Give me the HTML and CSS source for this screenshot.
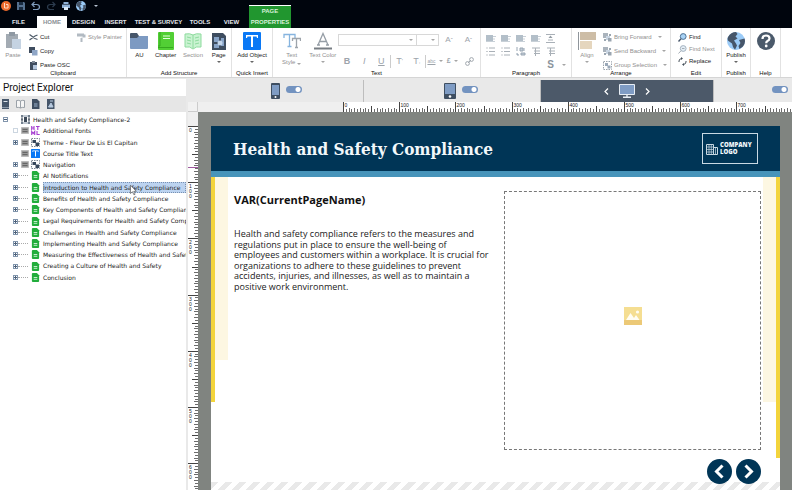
FILE: index.html
```html
<!DOCTYPE html>
<html lang="en">
<head>
<meta charset="utf-8">
<title>Health and Safety Compliance-2</title>
<link rel="stylesheet" href="styles.css">
</head>
<body>
<svg class="defs" aria-hidden="true">
  <symbol id="cut" viewBox="0 0 9 9"><path d="M.5 1.500 6 5.500M.5 7 6 3M6 3l2.500-1M6 5.500l2.500 1" fill="none" stroke="#4d5a68" stroke-width="1.200"/></symbol>
  <symbol id="copy" viewBox="0 0 9 9"><path d="M0 0h6v6H0z" fill="#3f4d5f"/><path d="M3 3h5.500v5.500H3z" fill="#8fa6c6"/></symbol>
  <symbol id="osc" viewBox="0 0 9 9"><path d="M1 1h7v8H1z" fill="#3f4d5f"/><path d="M3 0h3v2H3z" fill="#7d8896"/><path d="M4 4h4v4.500H4z" fill="#b4c7de"/></symbol>
  <symbol id="painter" viewBox="0 0 9 9"><path d="M0 .5h7v3H0zM7 1.500h1.500v3H4.500v1M3.500 5h2v4h-2z" fill="#b2bac2"/></symbol>
  <symbol id="paste" viewBox="0 0 16 18"><path d="M1 2h12v14H1z" fill="#a3abb3"/><path d="M4 0h6v4H4z" fill="#8f99a3"/><path d="M7 7h9v10H7z" fill="#c5d3e2"/></symbol>
  <symbol id="folder" viewBox="0 0 18 18"><path d="M0 4h18v12q0 1-1 1H1q-1 0-1-1z" fill="#7d9ac2"/><path d="M0 2q0-1 1-1h6l2 3-2 2H0z" fill="#46566a"/></symbol>
  <symbol id="chapter" viewBox="0 0 16 18"><rect width="16" height="18" rx="1" fill="#52cf35"/><path d="M2 0v14H0M0 15.500h15" stroke="#35a91f" fill="none"/><path d="M5 4h7M5 6.500h7" stroke="#e6ffe0"/></symbol>
  <symbol id="section" viewBox="0 0 18 18"><path d="M1 2q5-1 8 1 3-2 8-1v13q-5-1-8 2-3-3-8-2z" fill="#c9f3d1" stroke="#8edb9e"/><path d="M9 3v13M3 5l4 1M3 8l4 1M3 11l4 1M15 5l-4 1M15 8l-4 1M15 11l-4 1" stroke="#8edb9e" fill="none"/></symbol>
  <symbol id="page" viewBox="0 0 14 18"><path d="M0 1h11l3 3v14H0z" fill="#3e4d60"/><path d="M2 5h5v5H2zM9 6h3v8H9zM2 12h5v4H2z" fill="#87a3c7"/><circle cx="8" cy="11" r="2.500" fill="#c5d7ec"/></symbol>
  <symbol id="tbox" viewBox="0 0 18 18"><rect width="18" height="18" rx="1" fill="#0a78f5"/><path d="M3 3h12v3h-1l-.5-1.500h-3.500V15h-2V4.500H4.500L4 6H3z" fill="#fff"/></symbol>
  <symbol id="tt" viewBox="0 0 18 18"><path d="M1 6V2.500h11V6M6.500 2.500v12M4.500 14.500h4" fill="none" stroke="#86b4df" stroke-width="1.300"/><path d="M9.500 9V6.500h8V9M13.500 6.500v9M12 15.500h3" fill="none" stroke="#9da4ab" stroke-width="1.300"/></symbol>
  <symbol id="acolor" viewBox="0 0 18 18"><path d="M4 13 9 1.500l5 11.500M5.500 9.500h7M3 13h3M12 13h3" fill="none" stroke="#969ea6" stroke-width="1.300"/><path d="M0 15.500h18v2H0z" fill="#777d83"/></symbol>
  <symbol id="align" viewBox="0 0 18 18"><path d="M.5 0v18" stroke="#8f959b" stroke-width="1"/><path d="M2 0h16v8H2z" fill="#cdbda6"/><path d="M2 9h12v8H2z" fill="#e5d6be"/></symbol>
  <symbol id="layers" viewBox="0 0 9 9"><path d="M0 0h5v5H0z" fill="#aab3bc"/><path d="M3 3h4v4H3z" fill="#c9d5e2"/><path d="M5 5h3.500v3.500H5zM6 1h2v2H6zM1 6h2v2H1z" fill="#9aa5b0"/></symbol>
  <symbol id="group" viewBox="0 0 9 9"><path d="M.5.5h8v8h-8z" fill="none" stroke="#9aa3ac" stroke-dasharray="1.500 1"/><path d="M2 2h3v3H2zM4.500 4.500h3v3h-3z" fill="#9aa8b8"/></symbol>
  <symbol id="find" viewBox="0 0 9 9"><circle cx="5.200" cy="3.500" r="2.900" fill="#a8d2f5" stroke="#4f7294"/><path d="M3 5.800.5 8.500" stroke="#46566a" stroke-width="1.400"/></symbol>
  <symbol id="findnext" viewBox="0 0 9 9"><circle cx="5.200" cy="3.500" r="2.900" fill="#e4eef6" stroke="#a5b3c0"/><path d="M3 5.800.5 8.500M4 3.500h2.500" stroke="#a5adb5"/></symbol>
  <symbol id="replace" viewBox="0 0 9 9"><path d="M1 5V4q0-2 2.500-2.500M8 4v1q0 2-2.500 2.500" fill="none" stroke="#46505a"/><path d="M3 0l2 1.500L3 3zM6 6 4 7.500 6 9z" fill="#46505a"/></symbol>
  <symbol id="globe" viewBox="0 0 18 18"><circle cx="9" cy="9" r="9" fill="#9bcbf7"/><path d="M1 5Q4 0 9 0l1.500 2-2 2.500 2 2-3.500 2 2 3 1 2-2 4.300L6 15l-1-3.500L1.500 9Q0 8 1 5zM12 8l5.500-1.500q1.500 4-1.500 8L12.500 17l-1-3 2-3z" fill="#46566a"/></symbol>
  <symbol id="help" viewBox="0 0 18 18"><circle cx="9" cy="9" r="9" fill="#4b5a6b"/><path d="M5.500 7q0-3.500 3.500-3.500T12.500 6.500Q12.500 8 10.500 9 9.200 9.700 9.200 11.200" fill="none" stroke="#fff" stroke-width="2.200"/><circle cx="9.200" cy="14" r="1.400" fill="#fff"/></symbol>
  <symbol id="pleft" viewBox="0 0 10 9"><path d="M0 1h7v6H0z" fill="#b3bfc9"/><path d="M7 2.500h3M7 5h2M0 7.500h9" stroke="#c8d0d7"/></symbol>
  <symbol id="list" viewBox="0 0 10 9"><path d="M3 1h6M3 4.500h6M3 8h6" stroke="#a9b0b7"/><path d="M.5 1h1M.5 4.500h1M.5 8h1" stroke="#8e979f"/></symbol>
  <symbol id="num" viewBox="0 0 10 9"><path d="M1 0v4M1 6v2h2M4 1h3v3H4zM5 6h4v2H5zM8 1v3" stroke="#99a6b3" fill="#c2ccd6"/></symbol>
  <symbol id="ind" viewBox="0 0 10 9"><path d="M1 1h8M3 4h6M3 6.500h6M4.500 1v8" stroke="#a9b0b7" fill="none"/></symbol>
  <symbol id="gap" viewBox="0 0 10 9"><path d="M0 .5h9M0 8.500h9M2 6h5" stroke="#a9b0b7"/><path d="M2.500 4l2-2.500 2 2.500z" fill="#939ba3"/></symbol>
  <symbol id="link" viewBox="0 0 9 9"><path d="M3 6 6 3" stroke="#a0a7ae"/><circle cx="6.500" cy="2.500" r="1.900" fill="none" stroke="#a0a7ae"/><circle cx="2.500" cy="6.500" r="1.900" fill="none" stroke="#a0a7ae"/></symbol>
  <symbol id="doc" viewBox="0 0 8 10"><path d="M0 1q0-1 1-1h4.500L8 2.500V9q0 1-1 1H1q-1 0-1-1z" fill="#22ad3c"/><path d="M2 5h4M2 7h4" stroke="#d6f5dc"/></symbol>
  <symbol id="lines" viewBox="0 0 8 7"><path d="M.5.5h7v6h-7z" fill="#999" stroke="#bbb"/><path d="M1.500 2.500h5M1.500 4.500h5" stroke="#666"/></symbol>
  <symbol id="obj" viewBox="0 0 9 9"><path d="M.5.5h8v8h-8z" fill="none" stroke="#7b8794" stroke-dasharray="1.500 1"/><path d="M1.500 2h3.500v3H1.500zM4.500 4.500H8V8H4.500z" fill="#36475b"/></symbol>
  <symbol id="course" viewBox="0 0 9 9"><path d="M1 0v9M8 0v9" stroke="#3d4a59" stroke-width="1.600" stroke-dasharray="2.500 .7"/><path d="M3 2h3v5H3z" fill="#3d4a59"/><path d="M0 1h9M0 8h9" stroke="#8494a5"/></symbol>
  <symbol id="html" viewBox="0 0 9 9"><path d="M.7 0v4M3 0v4M.7 2H3M5 .5h3.600M6.800.5V4M.7 9V5.500L2.200 7.500 3.700 5.500V9M6 5v3.500h2.700" fill="none" stroke="#a43bd0" stroke-width="1.100"/></symbol>
  <symbol id="prev" viewBox="0 0 25 25"><circle cx="12.500" cy="12.500" r="12.500" fill="#003556"/><path d="M15.500 6.500 9.500 12.500l6 6" fill="none" stroke="#fff" stroke-width="3"/></symbol>
  <symbol id="next" viewBox="0 0 25 25"><circle cx="12.500" cy="12.500" r="12.500" fill="#003556"/><path d="M9.500 6.500l6 6-6 6" fill="none" stroke="#fff" stroke-width="3"/></symbol>
</svg>

<header class="top">
  <div class="quick">
    <button aria-label="Application"><svg viewBox="0 0 10 10"><circle cx="5" cy="5" r="5" fill="#ed6a2c"/><path d="M3.500 2v5h3.500M5 3.500h2V7" fill="none" stroke="#ffd9c2"/></svg></button>
    <button aria-label="Save"><svg viewBox="0 0 10 10"><path d="M1 1h7l1 1v7H1z" fill="#54708f"/><path d="M3 1h4v3H3zM3 6h4v3H3z" fill="#192b40"/></svg></button>
    <button aria-label="Undo"><svg viewBox="0 0 10 10"><path d="M3.500 1 1 3.500 3.500 6M1 3.500h4.500q3 0 3 2.500T5.500 8.500H2" fill="none" stroke="#7f9cbd" stroke-width="1.200"/></svg></button>
    <button aria-label="Redo"><svg viewBox="0 0 10 10"><path d="M6.500 1 9 3.500 6.500 6M9 3.500H4.500q-3 0-3 2.500T4.500 8.500H8" fill="none" stroke="#2c3c4e" stroke-width="1.200"/></svg></button>
    <button aria-label="Print"><svg viewBox="0 0 10 10"><path d="M2.500 1h5v2h-5zM1 3.500h8v3.500H1z" fill="#8fb0d5"/><path d="M3 6h4v3H3z" fill="#dbe8f6"/></svg></button>
    <button aria-label="Publish to web"><svg viewBox="0 0 18 18"><use href="#globe"/></svg></button>
    <button aria-label="Customize toolbar"><i class="caret light"></i></button>
  </div>
  <nav class="tabs">
    <button>FILE</button><button class="on">HOME</button><button>DESIGN</button><button>INSERT</button><button>TEST &amp; SURVEY</button><button>TOOLS</button><button>VIEW</button><button class="context"><span>PAGE</span><span>PROPERTIES</span></button>
  </nav>
</header>

<section class="ribbon" aria-label="Home">
  <div class="group"><div class="tools clip">
    <button class="big off"><svg><use href="#paste"/></svg>Paste</button>
    <div class="stack">
      <button class="row"><svg><use href="#cut"/></svg>Cut</button>
      <button class="row"><svg><use href="#copy"/></svg>Copy</button>
      <button class="row"><svg><use href="#osc"/></svg>Paste OSC</button>
    </div>
    <button class="row off"><svg><use href="#painter"/></svg>Style Painter</button>
  </div><h2>Clipboard</h2></div>

  <div class="group"><div class="tools spread">
    <button class="big"><svg><use href="#folder"/></svg>AU</button>
    <button class="big"><svg><use href="#chapter"/></svg>Chapter</button>
    <button class="big off"><svg><use href="#section"/></svg>Section</button>
    <button class="big"><svg><use href="#page"/></svg>Page<i class="caret"></i></button>
  </div><h2>Add Structure</h2></div>

  <div class="group"><div class="tools spread">
    <button class="big"><svg><use href="#tbox"/></svg>Add Object<i class="caret"></i></button>
  </div><h2>Quick Insert</h2></div>

  <div class="group"><div class="tools text">
    <button class="big off"><svg><use href="#tt"/></svg>Text<span>Style <i class="caret"></i></span></button>
    <button class="big off"><svg><use href="#acolor"/></svg>Text Color<i class="caret"></i></button>
    <div class="format">
      <div class="line">
        <div class="pick"><select aria-label="Font"><option></option></select><i class="caret"></i></div>
        <div class="pick size"><select aria-label="Font size"><option></option></select><i class="caret"></i></div>
        <button aria-label="Grow font">A<sup>ˆ</sup></button><button aria-label="Shrink font">A<sup>ˇ</sup></button>
      </div>
      <div class="line glyphs">
        <button><b>B</b></button><button><em>I</em></button><button><u>U</u></button><hr>
        <button aria-label="Superscript">T<sup>'</sup></button><button aria-label="Subscript">T<sub>,</sub></button><hr>
        <button aria-label="Spelling"><small>abc</small><i class="caret"></i></button><button aria-label="Symbol"><b class="sym">£</b><i class="caret"></i></button>
        <button aria-label="Link"><svg><use href="#link"/></svg></button>
      </div>
    </div>
  </div><h2>Text</h2></div>

  <div class="group"><div class="tools para">
    <button aria-label="Align left"><svg><use href="#pleft"/></svg></button><button aria-label="Align center"><svg><use href="#pleft"/></svg></button><button aria-label="Align right"><svg><use href="#pleft"/></svg></button><button aria-label="Justify"><svg><use href="#pleft"/></svg></button><button aria-label="Spacing"><svg><use href="#gap"/></svg></button>
    <button aria-label="Numbering"><svg><use href="#list"/></svg></button><button aria-label="Bullets"><svg><use href="#list"/></svg></button><button aria-label="List style"><svg><use href="#num"/></svg></button><button aria-label="Outdent"><svg><use href="#ind"/></svg></button><button aria-label="Indent"><svg><use href="#ind"/></svg></button>
    <button class="styles"><b>S</b><i class="caret"></i></button>
  </div><h2>Paragraph</h2></div>

  <div class="group"><div class="tools arrange">
    <button class="big off"><svg><use href="#align"/></svg>Align<i class="caret"></i></button>
    <div class="stack">
      <button class="row off"><svg><use href="#layers"/></svg>Bring Forward <i class="caret"></i></button>
      <button class="row off"><svg><use href="#layers"/></svg>Send Backward <i class="caret"></i></button>
      <button class="row off"><svg><use href="#group"/></svg>Group Selection <i class="caret"></i></button>
    </div>
  </div><h2>Arrange</h2></div>

  <div class="group"><div class="tools edit">
    <div class="stack tight">
      <button class="row"><svg><use href="#find"/></svg>Find</button>
      <button class="row off"><svg><use href="#findnext"/></svg>Find Next</button>
      <button class="row"><svg><use href="#replace"/></svg>Replace</button>
    </div>
  </div><h2>Edit</h2></div>

  <div class="group"><div class="tools spread"><button class="big"><svg><use href="#globe"/></svg>Publish<i class="caret"></i></button></div><h2>Publish</h2></div>
  <div class="group"><div class="tools spread"><button class="big" aria-label="Help"><svg><use href="#help"/></svg></button></div><h2>Help</h2></div>
</section>

<main class="work">
  <aside class="explorer">
    <h1>Project Explorer</h1>
    <div class="bar">
      <button aria-label="Book"><svg viewBox="0 0 9 10"><path d="M1 0h7v10H1z" fill="#46566a"/><path d="M2.500 2.500h4" stroke="#dce3ea"/><path d="M1 8.500h7" stroke="#8d9aa9"/></svg></button>
      <button aria-label="Open book"><svg viewBox="0 0 9 10"><path d="M.5 1.500q2.500-.5 4 .5 1.500-1 4-.5v7q-2.500-.5-4 .5-1.500-1-4-.5zM4.500 2v7" fill="#f6f6f6" stroke="#9aa1a8"/></svg></button>
      <button aria-label="Page"><svg viewBox="0 0 9 10"><path d="M1 0h5l2.500 2.500V10H1z" fill="#3f4e61"/><path d="M3 5h3.500M3 7h3.500" stroke="#9cb2cc"/></svg></button>
      <button aria-label="Object"><svg viewBox="0 0 9 10"><path d="M1 0h7.500v10H1z" fill="#46566a"/><path d="M2.500 8 5 4l2 4zM4 2h3" fill="#b9cbe0" stroke="#b9cbe0"/></svg></button>
    </div>
    <ul class="tree">
      <li class="root"><i class="tw minus"></i><svg><use href="#course"/></svg><span>Health and Safety Compliance-2</span></li>
      <li><i class="tw faint"></i><svg class="mark"><use href="#lines"/></svg><svg><use href="#html"/></svg><span>Additional Fonts</span></li>
      <li><i class="tw"></i><svg class="mark"><use href="#lines"/></svg><svg><use href="#obj"/></svg><span>Theme - Fleur De Lis El Capitan</span></li>
      <li><i class="tw none"></i><svg class="mark"><use href="#lines"/></svg><svg viewBox="0 0 18 18"><use href="#tbox"/></svg><span>Course Title Text</span></li>
      <li><i class="tw"></i><svg class="mark"><use href="#lines"/></svg><svg><use href="#obj"/></svg><span>Navigation</span></li>
      <li><i class="tw"></i><i class="dots"></i><svg><use href="#doc"/></svg><span>AI Notifications</span></li>
      <li class="sel"><i class="tw"></i><i class="dots"></i><svg><use href="#doc"/></svg><span>Introduction to Health and Safety Compliance</span>
        <svg class="pointer" viewBox="0 0 8 12"><path d="M.5.5v9.500l2.300-2 1.700 3.500 1.300-.6L4.300 7.500h3z" fill="#fff" stroke="#555" stroke-width=".8"/></svg></li>
      <li><i class="tw"></i><i class="dots"></i><svg><use href="#doc"/></svg><span>Benefits of Health and Safety Compliance</span></li>
      <li><i class="tw"></i><i class="dots"></i><svg><use href="#doc"/></svg><span>Key Components of Health and Safety Compliance</span></li>
      <li><i class="tw"></i><i class="dots"></i><svg><use href="#doc"/></svg><span>Legal Requirements for Health and Safety Compliance</span></li>
      <li><i class="tw"></i><i class="dots"></i><svg><use href="#doc"/></svg><span>Challenges in Health and Safety Compliance</span></li>
      <li><i class="tw"></i><i class="dots"></i><svg><use href="#doc"/></svg><span>Implementing Health and Safety Compliance</span></li>
      <li><i class="tw"></i><i class="dots"></i><svg><use href="#doc"/></svg><span>Measuring the Effectiveness of Health and Safety</span></li>
      <li><i class="tw"></i><i class="dots"></i><svg><use href="#doc"/></svg><span>Creating a Culture of Health and Safety</span></li>
      <li><i class="tw"></i><i class="dots"></i><svg><use href="#doc"/></svg><span>Conclusion</span></li>
    </ul>
  </aside>

  <section class="editor">
    <div class="devices">
      <div class="device phone"><svg viewBox="0 0 9 16"><rect width="9" height="16" rx="1" fill="#3f4f62"/><path d="M1 2h7v10H1z" fill="#7f9cc4"/><circle cx="4.500" cy="14" r="1" fill="#fff"/></svg><input type="checkbox" class="switch" aria-label="Phone layout" checked></div>
      <div class="device tablet"><svg viewBox="0 0 12 16"><rect width="12" height="16" rx="1" fill="#3f4f62"/><path d="M1 1h10v10H1z" fill="#7f9cc4"/><circle cx="6" cy="13.500" r="1.300" fill="#fff"/></svg><input type="checkbox" class="switch" aria-label="Tablet layout" checked></div>
      <div class="device desktop"><button aria-label="Previous device"><svg viewBox="0 0 5 7"><path d="M4 .5 1 3.500l3 3" fill="none" stroke="#fff" stroke-width="1.200"/></svg></button>
        <svg viewBox="0 0 16 14"><path d="M.5.5h15v10H.5z" fill="#7f9cc4" stroke="#e8eef5"/><path d="M8 11v2M4 13.300h8" stroke="#e8eef5" stroke-width="1.400"/></svg>
        <button aria-label="Next device"><svg viewBox="0 0 5 7"><path d="M1 .5l3 3-3 3" fill="none" stroke="#fff" stroke-width="1.200"/></svg></button></div>
      <div class="device last"><input type="checkbox" class="switch" aria-label="Alternate layout" checked></div>
    </div>
    <div class="sheet">
      <div class="corner"></div>
      <svg class="ruler-x" id="rx"></svg>
      <svg class="ruler-y" id="ry"></svg>
      <div class="canvas">
        <article class="page">
          <header><h2>Health and Safety Compliance</h2>
            <div class="logo"><svg viewBox="0 0 12 12"><path d="M.5 1.500h7v10h-7zM7.500 4.500h4v7h-4z" fill="none" stroke="#c9d9e3"/><path d="M.5 4h7M.5 6.500h7M.5 9h7M3 1.500v10M5.300 1.500v10M9.500 5v7" stroke="#c9d9e3" stroke-width=".7"/></svg><span>COMPANY<br>LOGO</span></div>
          </header>
          <div class="body">
            <div class="edge left"></div>
            <div class="copy"><h3>VAR(CurrentPageName)</h3>
              <p>Health and safety compliance refers to the measures and<br>regulations put in place to ensure the well-being of<br>employees and customers within a workplace. It is crucial for<br>organizations to adhere to these guidelines to prevent<br>accidents, injuries, and illnesses, as well as to maintain a<br>positive work environment.</p></div>
            <div class="media"><svg viewBox="0 0 18 18"><path d="M0 0h18v18H0z" fill="#f5de92"/><path d="M0 13h18v5H0z" fill="#ecc977"/><path d="M2 13l4.500-7 3.500 5 2-3 3.500 5z" fill="#fffdf3"/><circle cx="13.500" cy="5" r="1.600" fill="#fffdf3"/></svg></div>
            <div class="edge right"></div>
          </div>
          <footer></footer>
          <nav class="pager"><button aria-label="Previous"><svg><use href="#prev"/></svg></button><button aria-label="Next"><svg><use href="#next"/></svg></button></nav>
        </article>
      </div>
    </div>
  </section>
</main>
<script src="rulers.js"></script>
</body>
</html>
```
FILE: rulers.js
```js
// Draws both rulers; one hundred slide units span 56.2 screen pixels.
const STEP = 56.2 / 20;
const NS = 'http://www.w3.org/2000/svg';

function add(svg, tag, attrs, text) {
  const el = document.createElementNS(NS, tag);
  for (const k in attrs) el.setAttribute(k, attrs[k]);
  if (text !== undefined) el.textContent = text;
  svg.append(el);
}

function draw(svg, vertical, origin) {
  const box = svg.getBoundingClientRect();
  const length = vertical ? box.height : box.width;
  add(svg, 'rect', vertical
    ? { x: 0, y: origin, width: 10, height: Math.max(0, length - origin), fill: '#fff' }
    : { x: origin, y: 0, width: Math.max(0, length - origin), height: 10, fill: '#fff' });
  for (let i = 0; origin + i * STEP < length; i++) {
    const at = Math.round(origin + i * STEP) + 0.5;
    const size = i % 20 === 0 ? 10 : i % 10 === 0 ? 6 : i % 2 === 0 ? 4 : 3;
    add(svg, 'path', { d: vertical ? `M10 ${at}h${-size}` : `M${at} 10v${-size}`, stroke: size > 4 ? '#444' : '#6c6c6c' });
    if (i % 20 === 0) {
      const label = String(i * 5);
      if (vertical) [...label].forEach((c, n) => add(svg, 'text', { x: 1, y: at + 5 + n * 5 }, c));
      else add(svg, 'text', { x: at + 1, y: 5 }, label);
    }
  }
}

draw(document.getElementById('rx'), false, 145);
draw(document.getElementById('ry'), true, 14);
add(document.getElementById('ry'), 'path', { d: 'M0 55.5h10', stroke: '#a05aa0' });
```
FILE: styles.css
```css
* { box-sizing: border-box; }
body { margin: 0; height: 100vh; overflow: hidden; display: flex; flex-direction: column; background: #e9e9e9; color: #1c1c1c; font: 6px/8px "Liberation Sans", Arial, sans-serif; }
button { margin: 0; padding: 0; border: 0; background: none; color: inherit; font: inherit; white-space: nowrap; }
h1, h2, h3, p, ul { margin: 0; padding: 0; font-weight: normal; }
svg { flex: none; overflow: visible; }
.defs { display: none; }

.caret { display: inline-block; border: 2px solid transparent; border-top-color: #666; border-bottom: 0; }
.caret.light { border-top-color: #b8c4d2; }
.off .caret, .format .caret, .para .caret { border-top-color: #a5a5a5; }

.top { height: 28px; background: #00050d; color: #e4e8ec; display: flex; flex-direction: column; justify-content: space-between; }
.quick { display: flex; gap: 5px; height: 11px; padding-left: 1px; }
.quick button { width: 10px; display: flex; align-items: center; justify-content: center; }
.quick svg { width: 10px; height: 10px; }
.tabs { display: grid; grid-template-columns: 37px 30px 33px 31px 55px 28px 35px 42px; align-items: end; }
.tabs button { height: 12px; font-weight: bold; }
.tabs .on { background: #fff; color: #8a8f94; }
.tabs .context { height: 23px; margin-top: -11px; border-top: 1px solid #fff; background: #21962f; color: #d9f2dc; display: flex; flex-direction: column; justify-content: space-between; align-items: center; padding: 1px 0 2px; }

.ribbon { height: 50px; border-bottom: 1px solid #d5d5d5; background: #fff; display: grid; grid-template-columns: 127fr 105fr 41fr 208fr 91fr 99fr 51fr 29fr 30fr 11fr; grid-template-rows: minmax(0, 1fr); }
.group { min-width: 0; border-right: 1px solid #e2e2e2; padding-top: 4px; display: flex; flex-direction: column; justify-content: space-between; }
.group h2 { text-align: center; font-size: 6px; line-height: 8px; color: #111; }
.tools { display: flex; align-items: flex-start; flex: 1; min-height: 0; }
.spread { justify-content: space-around; }
.big { display: flex; flex-direction: column; align-items: center; line-height: 7px; }
.big > svg { width: 18px; height: 18px; margin-bottom: 2px; }
.big .caret { margin-top: 2px; }
.big span { display: flex; align-items: center; gap: 2px; }
.off { color: #909090; }
.row { display: flex; align-items: center; gap: 2px; height: 10px; }
.row svg { width: 9px; height: 9px; }
.row .caret { margin-left: 4px; }
.stack { display: flex; flex-direction: column; gap: 4px; }
.stack.tight { gap: 2px; }
.clip { padding-left: 4px; gap: 7px; }
.text { padding-left: 9px; gap: 8px; }
.format { flex: 1; display: flex; flex-direction: column; gap: 9px; margin-left: -6px; padding: 2px 2px 0 0; color: #9da4ab; }
.line { display: flex; align-items: center; }
.line button { font-size: 8px; line-height: 10px; display: flex; align-items: center; justify-content: center; gap: 3px; flex: 1; }
.line sup, .line sub { font-size: 6px; line-height: 6px; margin-left: -3px; }
.line hr { width: 1px; height: 13px; margin: 0; border: 0; background: #ccc; }
.glyphs { height: 12px; }
.glyphs button { font-size: 9px; }
.glyphs small { font-size: 5px; text-decoration: underline; }
.glyphs .sym { font-size: 7px; }
.glyphs svg { width: 9px; height: 9px; }
.pick { position: relative; width: 79px; height: 12px; }
.pick.size { width: 23px; margin-left: -1px; }
.pick select { appearance: none; width: 100%; height: 100%; border: 1px solid #d8d8d8; background: #fff; border-radius: 0; }
.pick .caret { position: absolute; right: 4px; top: 5px; }
.para { display: grid; grid-template-columns: repeat(5, minmax(0, 1fr)); grid-auto-rows: 10px; row-gap: 3px; padding: 2px 13px 0 3px; justify-items: center; }
.para svg { width: 10px; height: 9px; display: block; }
.para .styles { grid-column: 5; justify-self: start; display: flex; align-items: center; gap: 8px; padding-left: 4px; font-size: 10px; line-height: 10px; color: #8b949d; }
.arrange { padding-left: 6px; gap: 7px; }
.edit { padding-left: 7px; }

.work { flex: 1; min-height: 0; display: grid; grid-template-columns: 186px 1fr; padding-top: 1px; }
.explorer { min-width: 0; background: #fff; overflow: hidden; }
.explorer h1 { height: 17px; padding-left: 3px; font: 10px/17px Roboto, sans-serif; color: #111; }
.bar { height: 16px; background: #e6e6e6; display: flex; align-items: center; gap: 6px; padding-left: 1px; }
.bar svg { width: 9px; height: 10px; display: block; }
.tree { list-style: none; padding-top: 2px; font: 6px/1.88 "DejaVu Sans", sans-serif; color: #222; }
.tree li { position: relative; display: flex; align-items: center; padding-left: 13px; white-space: nowrap; overflow: hidden; }
.tree li.sel { overflow: visible; }
.tree li.root { padding-left: 3px; }
.tree svg { width: 9px; height: 9px; margin-right: 3px; }
.tree .mark { width: 8px; height: 7px; margin: 0 2px 0 3px; }
.tw { flex: none; width: 5px; height: 5px; border: 1px solid #8296ad; background: linear-gradient(#4c6079, #4c6079) center / 3px 1px no-repeat, linear-gradient(#4c6079, #4c6079) center / 1px 3px no-repeat; }
.tw.minus { margin-right: 13px; background: linear-gradient(#4c6079, #4c6079) center / 3px 1px no-repeat; }
.tw.faint { border-color: #ccd6e0; background: none; }
.tw.none { border: 0; background: none; }
.dots { flex: none; width: 10px; margin-right: 3px; border-top: 1px dotted #aaa; }
.sel span { flex: 1; background: #bcd3f0; outline: 1px dotted #7890b0; outline-offset: -1px; }
.tree .pointer { position: absolute; left: 130px; top: 2px; width: 7px; height: 12px; margin: 0; z-index: 1; }

.editor { min-width: 0; min-height: 0; padding-left: 2px; display: flex; flex-direction: column; }
.devices { height: 23px; padding-top: 1px; display: grid; grid-template-columns: 176fr 177fr 173fr 78fr; }
.device { border-right: 1px solid #bdbdbd; display: flex; align-items: center; justify-content: center; gap: 6px; }
.phone { padding-left: 22px; }
.phone svg { width: 9px; height: 16px; }
.tablet { padding-left: 18px; }
.tablet svg { width: 12px; height: 16px; }
.desktop { background: #4c5969; gap: 10px; }
.desktop > svg { width: 16px; height: 14px; }
.desktop button svg { width: 5px; height: 7px; display: block; }
.last { justify-content: flex-end; padding-right: 4px; border: 0; }
.switch { appearance: none; margin: 0 0 3px; width: 16px; height: 7px; border-radius: 4px; background: radial-gradient(circle at 12px 50%, #fff 2px, transparent 3px) #7393c0; }
.sheet { flex: 1; min-height: 0; display: grid; grid-template-columns: 10px 1fr; grid-template-rows: 10px 1fr; background: #f1f1f1; }
.corner { border-right: 1px solid #ccc; border-bottom: 1px solid #ccc; }
.sheet > svg { display: block; overflow: hidden; background: #efefef; }
.sheet text { font: 5px "Liberation Sans", sans-serif; fill: #222; }
.ruler-x { width: 100%; height: 10px; }
.ruler-y { width: 10px; height: 100%; }
.canvas { min-height: 0; background: #808480; padding: 14px 12px 0 13px; overflow: hidden; }
.page { position: relative; height: 100%; background: #fff; display: flex; flex-direction: column; }
.page > header { height: 51px; background: #003556; border-bottom: 6px solid #4794ba; display: flex; align-items: center; justify-content: space-between; padding: 0 22px; color: #f2f8fb; }
.page > header h2 { font: bold 17px/20px "DejaVu Serif Condensed", "DejaVu Serif", serif; }
.logo { border: 1px solid #c9d9e3; height: 31px; width: 56px; display: flex; align-items: center; gap: 2px; padding-left: 3px; font: 800 6px/7px "Open Sans", sans-serif; }
.logo svg { width: 12px; height: 12px; }
.body { flex: 1; min-height: 0; display: grid; grid-template-columns: 17px 276fr 257fr 19px; align-items: start; }
.edge { position: relative; height: 183px; background: #fdf7e2; margin-left: 4px; }
.edge::before { content: ""; position: absolute; top: 0; width: 4px; background: #f3d43c; }
.edge.left::before { left: -4px; height: 225px; }
.edge.right { height: 225px; margin: 0 4px 0 2px; }
.edge.right::before { right: -4px; height: 281px; }
.copy { padding: 14px 0 0 6px; color: #222; }
.copy h3 { font: bold 11px/18px "Open Sans", sans-serif; color: #111; }
.copy p { margin-top: 20px; font: 9px/1.17 "Open Sans", sans-serif; white-space: nowrap; }
.media { margin-top: 14px; padding-bottom: 10px; height: 259px; border: 1px dashed #777; display: flex; align-items: center; justify-content: center; }
.media svg { width: 18px; height: 18px; }
.page footer { height: 8px; background: repeating-linear-gradient(135deg, #e9e9e9 0 5px, #fff 5px 10px); }
.pager { position: absolute; right: 19px; bottom: 6px; display: flex; gap: 4px; }
.pager svg { display: block; width: 25px; height: 25px; }
```
